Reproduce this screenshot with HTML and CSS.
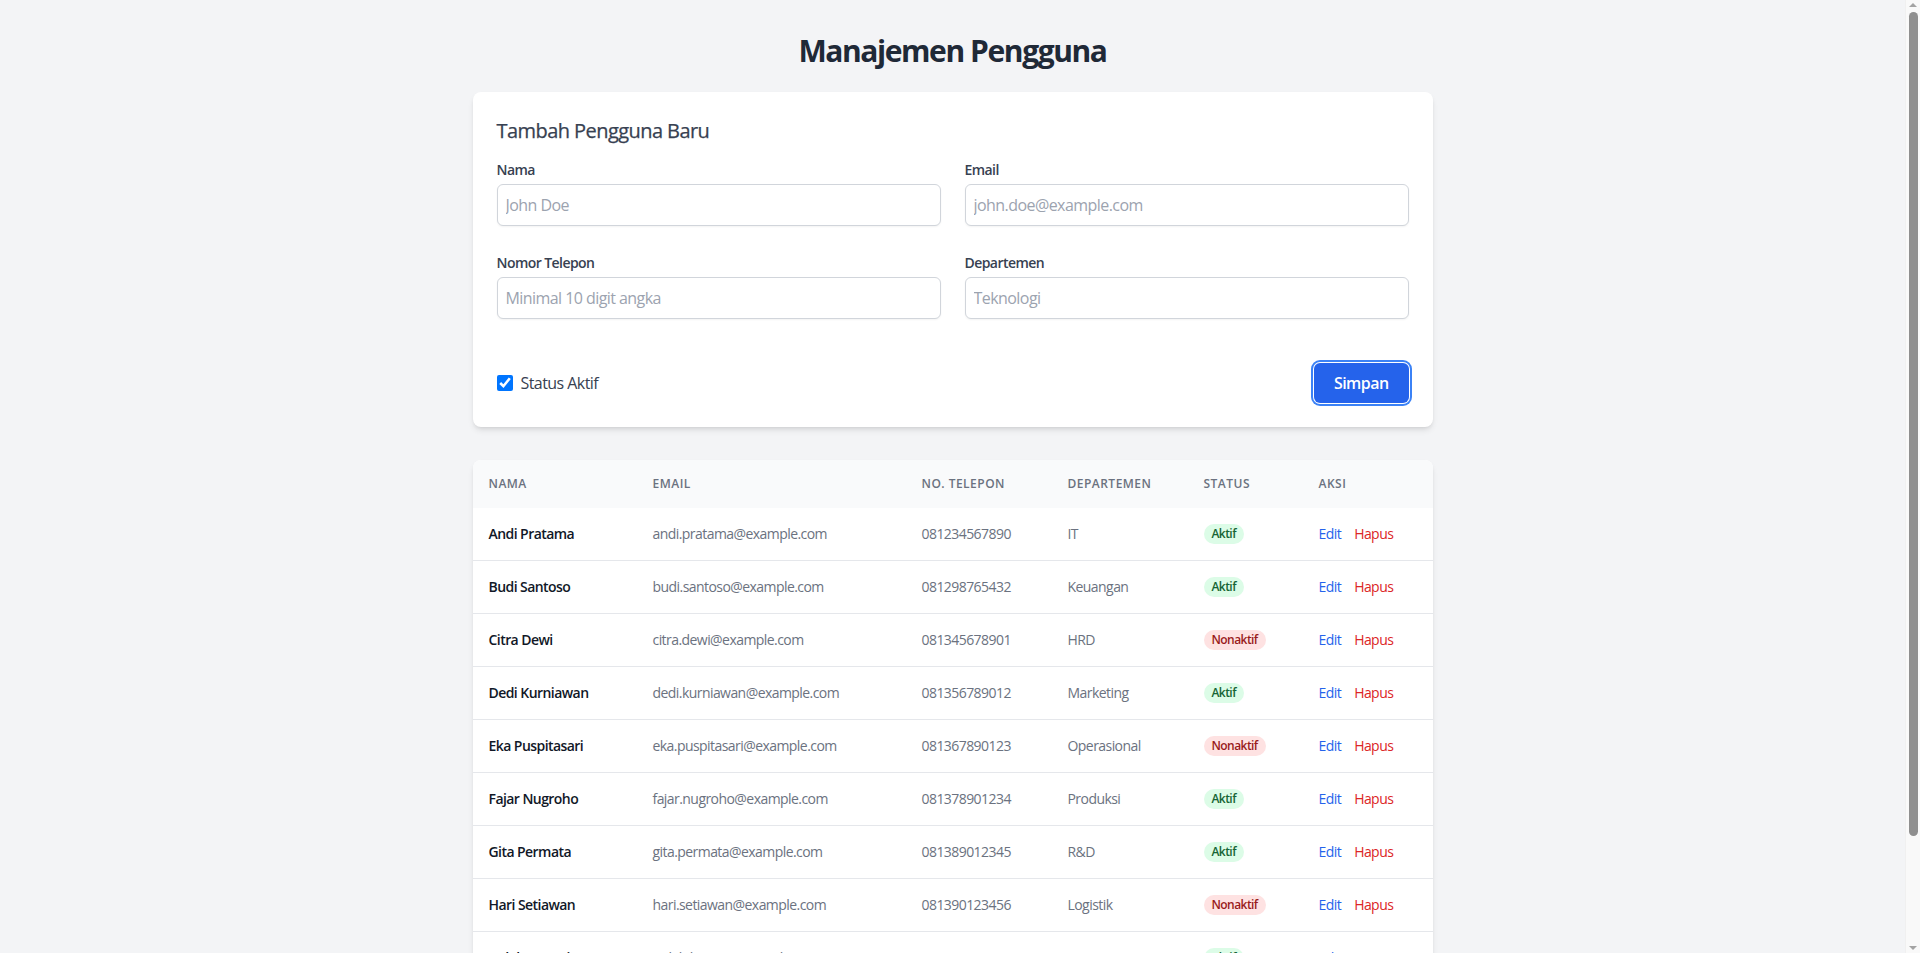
FILE: index.html
```html
<!DOCTYPE html>
<html lang="id">
<head>
<meta charset="utf-8">
<title>Manajemen Pengguna</title>
<link rel="stylesheet" href="styles.css">
</head>
<body>
<div class="container">
  <h1 class="page-title">Manajemen Pengguna</h1>

  <div class="card form-card">
    <h2 class="form-title">Tambah Pengguna Baru</h2>
    <form class="user-form">
      <div class="fields">
        <div class="field">
          <label class="label" for="nama">Nama</label>
          <input class="input" id="nama" type="text" placeholder="John Doe">
        </div>
        <div class="field">
          <label class="label" for="email">Email</label>
          <input class="input" id="email" type="email" placeholder="john.doe@example.com">
        </div>
        <div class="field">
          <label class="label" for="telp">Nomor Telepon</label>
          <input class="input" id="telp" type="text" placeholder="Minimal 10 digit angka">
        </div>
        <div class="field">
          <label class="label" for="dept">Departemen</label>
          <input class="input" id="dept" type="text" placeholder="Teknologi">
        </div>
      </div>
      <div class="actions">
        <label class="check">
          <input type="checkbox" class="checkbox" checked>
          <span>Status Aktif</span>
        </label>
        <button type="button" class="btn-primary">Simpan</button>
      </div>
    </form>
  </div>

  <div class="card table-card">
    <table class="users">
      <colgroup>
        <col class="c-nama"><col class="c-email"><col class="c-telp"><col class="c-dept"><col class="c-status"><col class="c-aksi">
      </colgroup>
      <thead>
        <tr>
          <th>Nama</th><th>Email</th><th>No. Telepon</th><th>Departemen</th><th>Status</th><th>Aksi</th>
        </tr>
      </thead>
      <tbody>
        <tr><td class="name">Andi Pratama</td><td>andi.pratama@example.com</td><td>081234567890</td><td>IT</td><td><span class="badge on">Aktif</span></td><td><a class="act edit">Edit</a><a class="act del">Hapus</a></td></tr>
        <tr><td class="name">Budi Santoso</td><td>budi.santoso@example.com</td><td>081298765432</td><td>Keuangan</td><td><span class="badge on">Aktif</span></td><td><a class="act edit">Edit</a><a class="act del">Hapus</a></td></tr>
        <tr><td class="name">Citra Dewi</td><td>citra.dewi@example.com</td><td>081345678901</td><td>HRD</td><td><span class="badge off">Nonaktif</span></td><td><a class="act edit">Edit</a><a class="act del">Hapus</a></td></tr>
        <tr><td class="name">Dedi Kurniawan</td><td>dedi.kurniawan@example.com</td><td>081356789012</td><td>Marketing</td><td><span class="badge on">Aktif</span></td><td><a class="act edit">Edit</a><a class="act del">Hapus</a></td></tr>
        <tr><td class="name">Eka Puspitasari</td><td>eka.puspitasari@example.com</td><td>081367890123</td><td>Operasional</td><td><span class="badge off">Nonaktif</span></td><td><a class="act edit">Edit</a><a class="act del">Hapus</a></td></tr>
        <tr><td class="name">Fajar Nugroho</td><td>fajar.nugroho@example.com</td><td>081378901234</td><td>Produksi</td><td><span class="badge on">Aktif</span></td><td><a class="act edit">Edit</a><a class="act del">Hapus</a></td></tr>
        <tr><td class="name">Gita Permata</td><td>gita.permata@example.com</td><td>081389012345</td><td>R&amp;D</td><td><span class="badge on">Aktif</span></td><td><a class="act edit">Edit</a><a class="act del">Hapus</a></td></tr>
        <tr><td class="name">Hari Setiawan</td><td>hari.setiawan@example.com</td><td>081390123456</td><td>Logistik</td><td><span class="badge off">Nonaktif</span></td><td><a class="act edit">Edit</a><a class="act del">Hapus</a></td></tr>
        <tr><td class="name">Indah Lestari</td><td>indah.lestari@example.com</td><td>081301234567</td><td>Pemasaran</td><td><span class="badge on">Aktif</span></td><td><a class="act edit">Edit</a><a class="act del">Hapus</a></td></tr>
        <tr><td class="name">Joko Susilo</td><td>joko.susilo@example.com</td><td>081312345678</td><td>Keuangan</td><td><span class="badge on">Aktif</span></td><td><a class="act edit">Edit</a><a class="act del">Hapus</a></td></tr>
      </tbody>
    </table>
  </div>
</div>

<div class="scrollbar" aria-hidden="true">
  <span class="sb-arrow up"></span>
  <span class="sb-thumb"></span>
  <span class="sb-arrow down"></span>
</div>
</body>
</html>
```

FILE: styles.css
```css
* { box-sizing: border-box; }

body {
  margin: 0;
  padding-right: 15px;
  background: #f3f4f6;
  font-family: "Segoe UI", "Open Sans", "Noto Sans", sans-serif;
  letter-spacing: -0.035em;
  color: #111827;
}

.container {
  max-width: 960px;
  margin: 0 auto;
  padding: 33px 0 32px;
}

.page-title {
  margin: 0 0 23px;
  text-align: center;
  font-size: 30px;
  line-height: 36px;
  font-weight: 700;
  letter-spacing: -0.047em;
  color: #1f2937;
}

.card {
  background: #fff;
  border-radius: 8px;
  box-shadow: 0 4px 6px -1px rgba(0,0,0,0.1), 0 2px 4px -2px rgba(0,0,0,0.1);
}

.form-card {
  padding: 24px;
  margin-bottom: 33px;
}

.form-title {
  margin: 1px 0 15px;
  font-size: 20px;
  line-height: 28px;
  font-weight: 500;
  color: #374151;
  -webkit-text-stroke: 0.25px #374151;
}

.fields {
  display: grid;
  grid-template-columns: 1fr 1fr;
  column-gap: 24px;
  row-gap: 27px;
}

.field {
  display: flex;
  flex-direction: column;
  gap: 4px;
}

.label {
  font-size: 14px;
  line-height: 20px;
  font-weight: 600;
  color: #374151;
}

.input {
  height: 42px;
  padding: 8px;
  border: 1px solid #d1d5db;
  border-radius: 6px;
  font: inherit;
  font-size: 16px;
  line-height: 24px;
  letter-spacing: -0.035em;
  color: #111827;
  box-shadow: 0 1px 2px 0 rgba(0,0,0,0.05);
  outline: none;
}

.input::placeholder { color: #9ca3af; }

.actions {
  margin-top: 44px;
  display: flex;
  align-items: center;
  justify-content: space-between;
}

.check {
  display: flex;
  align-items: center;
  gap: 8px;
  font-size: 16px;
  line-height: 24px;
  color: #374151;
}

.checkbox {
  width: 16px;
  height: 16px;
  margin: 0;
  accent-color: #0075ff;
}

.btn-primary {
  height: 40px;
  padding: 8px 20px;
  border: 0;
  border-radius: 6px;
  background: #2563eb;
  color: #fff;
  font: inherit;
  font-size: 16px;
  line-height: 24px;
  font-weight: 600;
  letter-spacing: -0.035em;
  box-shadow: 0 0 0 1px #fff, 0 0 0 3px #3b82f6;
}

.table-card { overflow: hidden; }

.users {
  width: 100%;
  border-collapse: collapse;
  table-layout: fixed;
}

.c-nama { width: 164px; }
.c-email { width: 269px; }
.c-telp { width: 146px; }
.c-dept { width: 136px; }
.c-status { width: 115px; }
.c-aksi { width: 130px; }

.users thead { background: #f9fafb; }

.users th {
  padding: 16px;
  text-align: left;
  font-size: 12px;
  line-height: 16px;
  font-weight: 600;
  color: #6b7280;
  text-transform: uppercase;
  letter-spacing: 0.04em;
}

.users td {
  padding: 16px;
  font-size: 14px;
  line-height: 20px;
  height: 53px;
  color: #6b7280;
  white-space: nowrap;
  border-top: 1px solid #e5e7eb;
}

.users tbody tr:first-child td { border-top: 0; height: 52px; }

.users td.name {
  font-weight: 600;
  color: #111827;
}

.badge {
  display: inline-block;
  vertical-align: top;
  padding: 0 8px;
  border-radius: 9999px;
  font-size: 12px;
  line-height: 20px;
  font-weight: 600;
}

.badge.on { background: #dcfce7; color: #166534; }
.badge.off { background: #fee2e2; color: #991b1b; }

.act {
  font-weight: 500;
  cursor: pointer;
}

.act.edit { color: #2563eb; margin-right: 13px; }
.act.del { color: #dc2626; }

/* simulated browser scrollbar */
.scrollbar {
  position: fixed;
  top: 0;
  right: 0;
  bottom: 0;
  width: 15px;
  background: #f9f9f9;
  border-left: 1px solid #f0f0f0;
}

.sb-thumb {
  position: absolute;
  top: 12px;
  left: 3px;
  width: 9px;
  height: 824px;
  border-radius: 5px;
  background: #8f8f8f;
}

.sb-arrow {
  position: absolute;
  left: 3px;
  width: 0;
  height: 0;
  border-left: 4.5px solid transparent;
  border-right: 4.5px solid transparent;
}

.sb-arrow.up { top: 3px; border-bottom: 4px solid #a3a3a3; }
.sb-arrow.down { bottom: 3px; border-top: 4px solid #a3a3a3; }
```
